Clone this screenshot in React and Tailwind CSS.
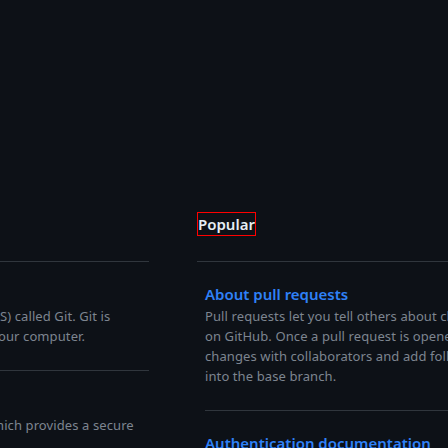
const rightArticles = [
  {
    title: "About pull requests",
    lines: [
      "Pull requests let you tell others about changes you've pushed to a branch",
      "on GitHub. Once a pull request is opened, you can discuss and review",
      "changes with collaborators and add follow-up commits before your",
      "into the base branch.",
    ],
  },
  { title: "Authentication documentation", lines: [] },
];

const Article = ({ title, lines, last }) => (
  <div className={`pt-5 pb-6 ${last ? "" : "border-b border-[#30363d]"}`}>
    <h3 className="whitespace-nowrap text-[15px] font-semibold leading-6 text-[#2f81f7]">{title}</h3>
    <div className="text-[13px] leading-5 tracking-[0.1px] text-[#7d8590]">
      {lines.map((line) => (
        <p key={line} className="whitespace-nowrap">
          {line}
        </p>
      ))}
    </div>
  </div>
);

export default function App() {
  return (
    <div className="h-[448px] w-[448px] overflow-hidden bg-[#0d1117] font-['Noto_Sans',sans-serif]">
      <div className="flex gap-12 pt-[212px]">
        {/* left column, mostly scrolled off screen */}
        <div className="w-[149px] shrink-0 overflow-hidden">
          <div className="h-[50px] border-b border-[#30363d]" />
          <div className="border-b border-[#30363d] pt-5 pb-6">
            <div className="h-6" />
            <div className="text-[13px] leading-5 tracking-[0.1px] text-[#7d8590]">
              <p className="whitespace-nowrap">S) called Git. Git is</p>
              <p className="-ml-[2px] whitespace-nowrap">our computer.</p>
            </div>
          </div>
          <div className="pt-5">
            <div className="h-6" />
            <p className="-ml-[4px] whitespace-nowrap text-[13px] leading-5 tracking-[0.1px] text-[#7d8590]">
              hich provides a secure
            </p>
          </div>
        </div>

        {/* right column */}
        <div className="min-w-0 flex-1">
          <div className="h-[50px] border-b border-[#30363d]">
            <h2 className="inline-block border border-[#ff0000] text-[15px] font-semibold leading-[22px] text-[#e6edf3]">
              Popular
            </h2>
          </div>
          <div className="pl-2">
            {rightArticles.map((a, i) => (
              <Article key={a.title} {...a} last={i === rightArticles.length - 1} />
            ))}
          </div>
        </div>
      </div>
    </div>
  );
}
